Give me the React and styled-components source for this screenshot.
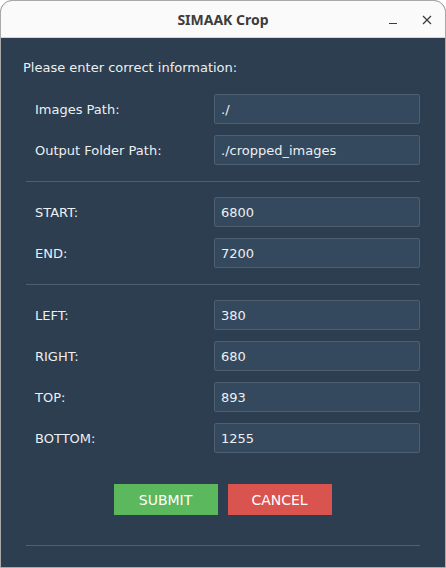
import styled, { createGlobalStyle } from 'styled-components'

const Global = createGlobalStyle`
  * { box-sizing: border-box; }
  html, body { margin: 0; padding: 0; background: #ffffff; }
  body { font-family: "DejaVu Sans", "Noto Sans", sans-serif; }
`

const Window = styled.div`
  width: 446px;
  height: 568px;
  display: flex;
  flex-direction: column;
  border: 1px solid #a9a9a9;
  border-radius: 12px 12px 0 0;
  overflow: hidden;
  background: #2c3e50;
`

const TitleBar = styled.div`
  height: 37px;
  flex-shrink: 0;
  background: #fafafa;
  border-bottom: 1px solid #d4d4d4;
  display: flex;
  align-items: center;
  justify-content: center;
  position: relative;
`

const Title = styled.span`
  font-family: "Noto Sans", "DejaVu Sans", sans-serif;
  font-weight: 700;
  font-size: 14px;
  color: #3d3d3d;
  margin-top: 1px;
`

const Controls = styled.div`
  position: absolute;
  right: 13px;
  top: 0;
  height: 37px;
  display: flex;
  align-items: center;
  gap: 24px;
`

const Body = styled.div`
  flex: 1;
  padding: 21px 25px 0 22px;
  color: #ecf0f1;
  font-size: 13px;
`

const Heading = styled.div`
  line-height: 18px;
  margin-bottom: 17px;
`

const Section = styled.div`
  display: flex;
  flex-direction: column;
  gap: 11px;
  padding-left: 12px;
`

const Row = styled.div`
  display: flex;
  align-items: center;
  height: 30px;
`

const Label = styled.label`
  width: 179px;
  color: #ecf0f1;
`

const Input = styled.input`
  width: 206px;
  height: 30px;
  background: #34495e;
  border: 1px solid #4e5f70;
  border-radius: 2px;
  color: #ecf0f1;
  font-family: inherit;
  font-size: 13px;
  padding: 0 6px;
  outline: none;
`

const Divider = styled.hr`
  margin: ${(p) => p.$m || '16px 0 15px'};
  margin-left: 3px;
  border: none;
  border-top: 1px solid #4e5f70;
  height: 0;
`

const Buttons = styled.div`
  display: flex;
  justify-content: center;
  gap: 10px;
  margin-top: 31px;
  padding-left: 2px;
`

const Button = styled.button`
  width: 104px;
  height: 31px;
  border: none;
  border-radius: 0;
  background: ${(p) => p.$bg};
  color: #ffffff;
  font-family: inherit;
  font-size: 14px;
`

const rows1 = [
  ['Images Path:', './'],
  ['Output Folder Path:', './cropped_images'],
]
const rows2 = [
  ['START:', '6800'],
  ['END:', '7200'],
]
const rows3 = [
  ['LEFT:', '380'],
  ['RIGHT:', '680'],
  ['TOP:', '893'],
  ['BOTTOM:', '1255'],
]

function Fields({ rows }) {
  return (
    <Section>
      {rows.map(([l, v]) => (
        <Row key={l}>
          <Label>{l}</Label>
          <Input defaultValue={v} />
        </Row>
      ))}
    </Section>
  )
}

export default function App() {
  return (
    <>
      <Global />
      <Window>
        <TitleBar>
          <Title>SIMAAK Crop</Title>
          <Controls>
            <svg width="10" height="10" viewBox="0 0 10 10" style={{ marginTop: 3 }}>
              <path d="M1 7.5h8" stroke="#3d3d3d" strokeWidth="1.2" />
            </svg>
            <svg width="10" height="10" viewBox="0 0 10 10">
              <path d="M1 1l8 8M9 1l-8 8" stroke="#3d3d3d" strokeWidth="1.3" />
            </svg>
          </Controls>
        </TitleBar>
        <Body>
          <Heading>Please enter correct information:</Heading>
          <Fields rows={rows1} />
          <Divider />
          <Fields rows={rows2} />
          <Divider />
          <Fields rows={rows3} />
          <Buttons>
            <Button $bg="#5cb85c">SUBMIT</Button>
            <Button $bg="#d9534f">CANCEL</Button>
          </Buttons>
          <Divider $m="30px 0 0" />
        </Body>
      </Window>
    </>
  )
}
